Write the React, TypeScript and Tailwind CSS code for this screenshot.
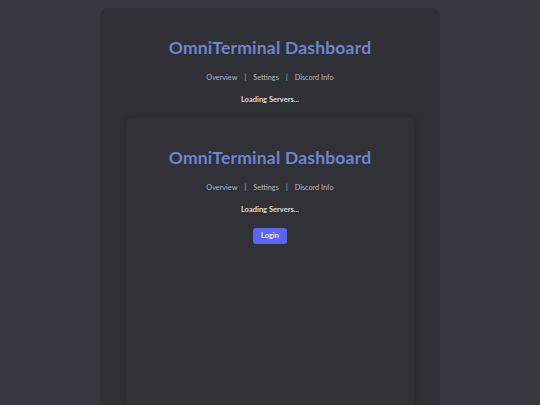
const font = { fontFamily: 'Lato, "Noto Sans", sans-serif' }

function Header({ children }: { children?: React.ReactNode }) {
  return (
    <div className="flex flex-col items-center">
      <h1 className="mt-[26px] text-[17.5px] leading-[27px] font-bold text-[#6f84d0] tracking-[0.2px]">
        OmniTerminal Dashboard
      </h1>
      <nav className="mt-[11px] flex items-center gap-[7px] text-[7.3px] leading-[12px] text-[#b5b7ba]">
        <span>Overview</span>
        <span>|</span>
        <span>Settings</span>
        <span>|</span>
        <span>Discord Info</span>
      </nav>
      <p className="mt-[10px] text-[7.5px] leading-[12px] font-bold text-[#dcddde]">Loading Servers...</p>
      {children}
    </div>
  )
}

export default function App() {
  return (
    <div className="min-h-[405px] h-[405px] overflow-hidden bg-[#36393f]" style={font}>
      <div className="mx-auto mt-2 w-[340px] h-[420px] rounded-lg bg-[#2f3136] px-[25px]">
        <Header>
          <div className="mt-[11px] w-full h-[300px] rounded-md bg-[#303237] border border-[#2b2d31] shadow-[0_0_6px_rgba(0,0,0,0.15)]">
            <Header>
              <button className="mt-[12px] h-[16px] px-[8px] rounded-[3px] bg-[#5865f2] text-[7.5px] font-medium text-white">
                Login
              </button>
            </Header>
          </div>
        </Header>
      </div>
    </div>
  )
}
